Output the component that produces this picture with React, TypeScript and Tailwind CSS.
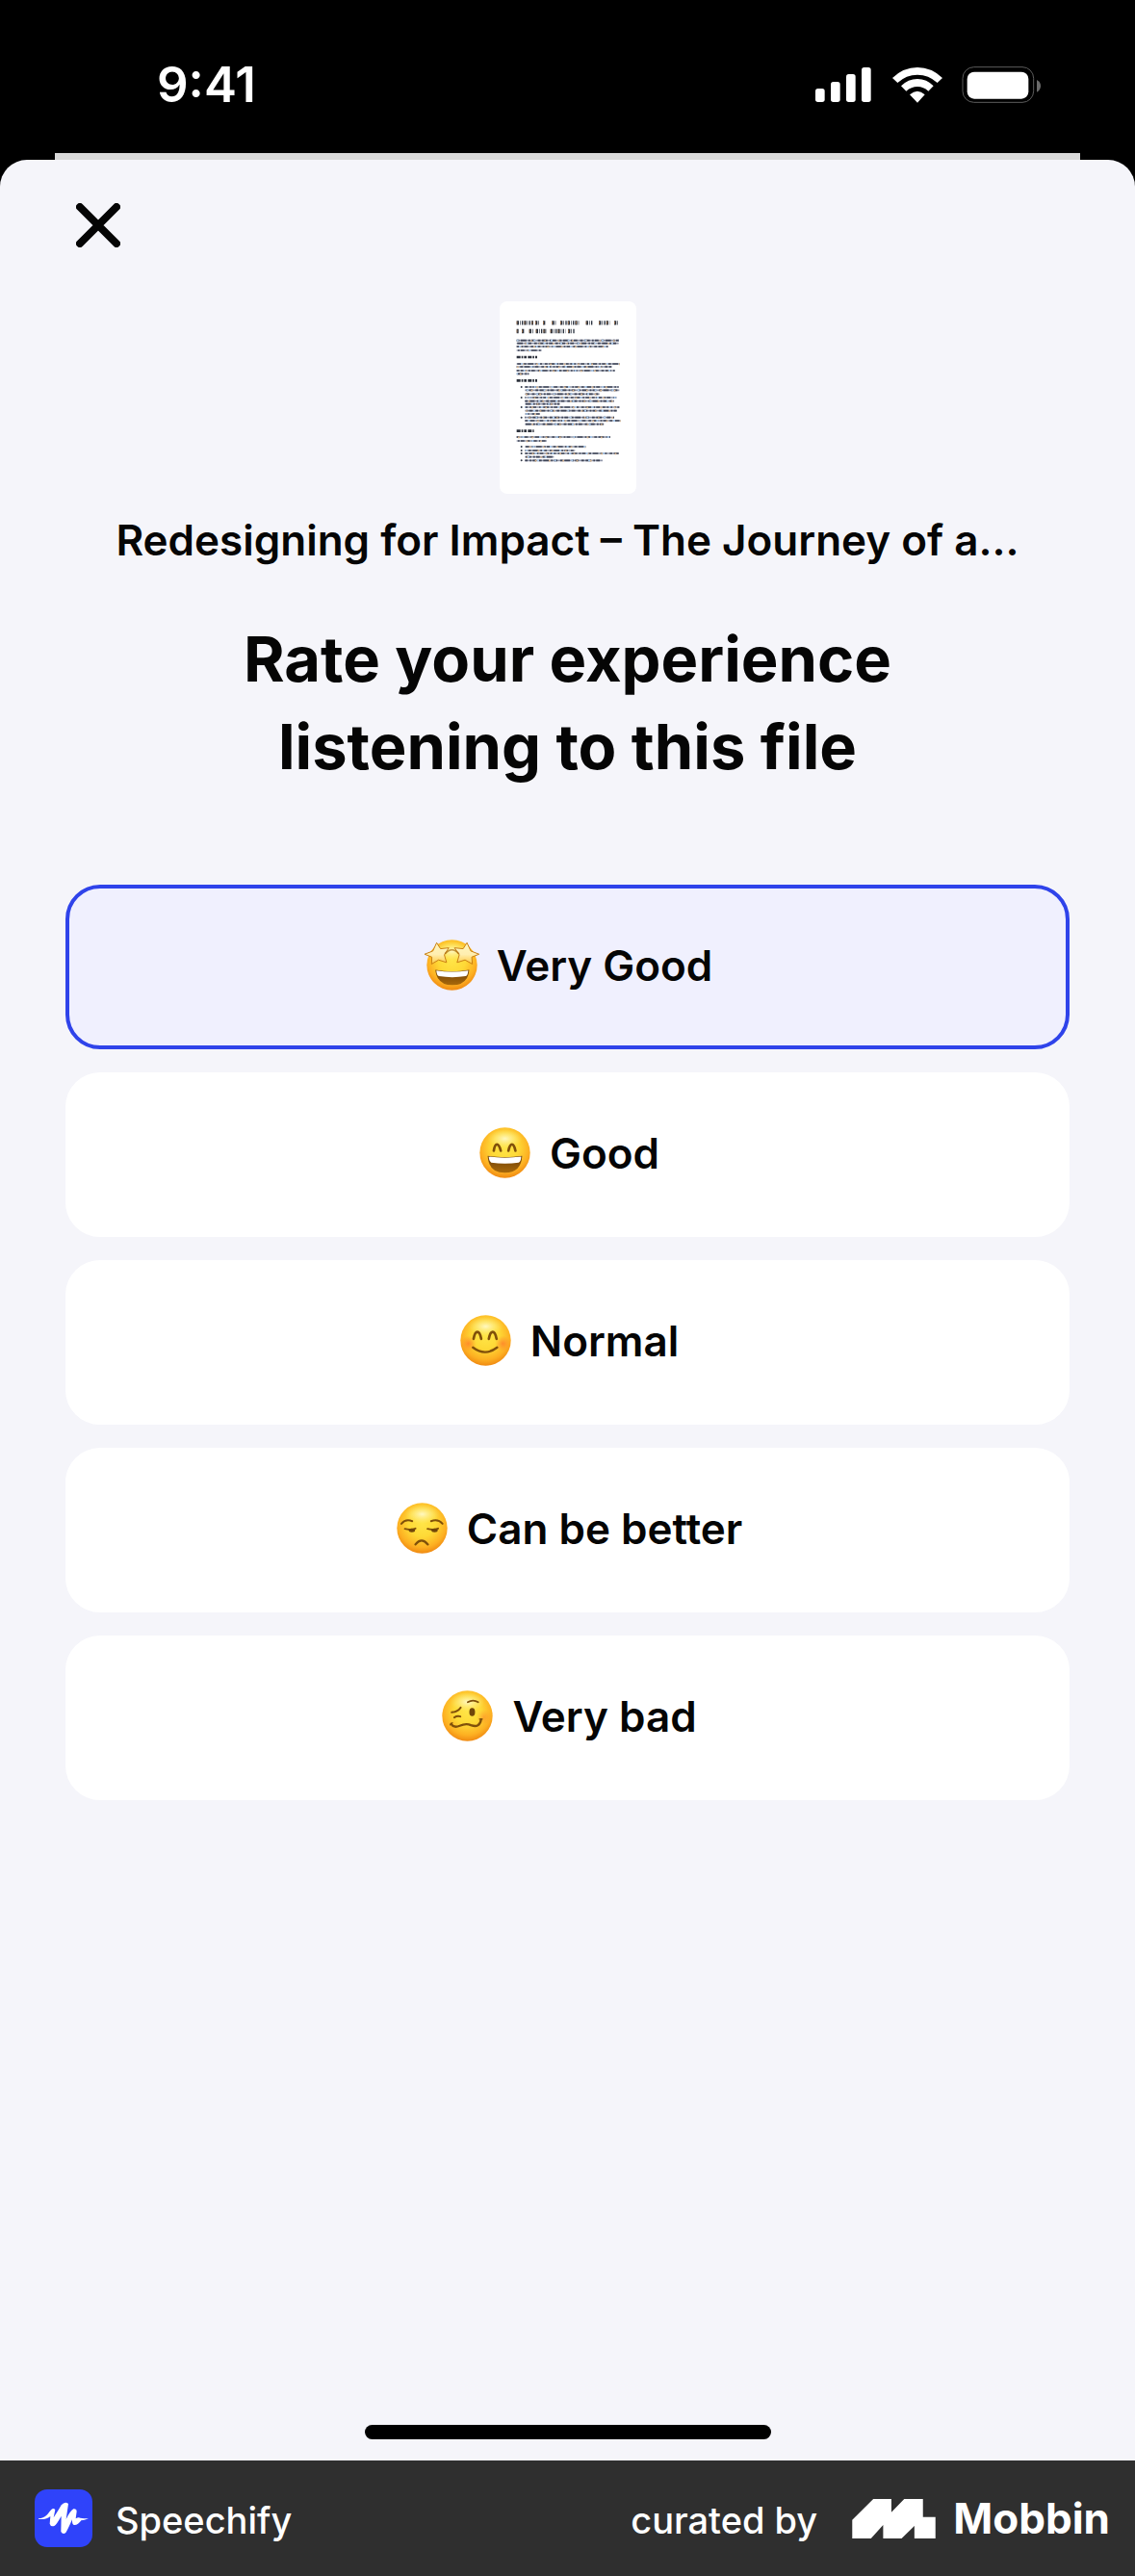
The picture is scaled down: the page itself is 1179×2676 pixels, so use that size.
import { useState, type ReactNode } from 'react'

const thumbnailTitle = [
  { y: 107, dashes: 'M106 107H158M164 107H178M188 107H196M216 107H232M242 107H300M322 107H345M362 107H396M410 107H424' },
  { y: 133, dashes: 'M106 133H112M122 133H129M145 133H158M166 133H200M211 133H258M266 133H286' },
]

// x start, x end, y of every line of the document preview
const thumbnailLines = [
  [106, 425, 162],
  [106, 424, 171],
  [106, 392, 181],
  [106, 184, 193],
  [106, 428, 235],
  [106, 402, 244],
  [106, 412, 256],
  [106, 144, 266],
  [132, 424, 307],
  [132, 426, 317],
  [132, 364, 329],
  [132, 418, 340],
  [132, 410, 351],
  [132, 240, 360],
  [132, 426, 370],
  [132, 418, 381],
  [132, 178, 391],
  [132, 410, 402],
  [132, 430, 412],
  [132, 378, 423],
  [106, 398, 463],
  [106, 200, 475],
  [132, 322, 493],
  [132, 288, 505],
  [132, 424, 514],
  [132, 222, 525],
  [132, 374, 536],
]

const thumbnailHeadings = [
  [106, 170, 214],
  [106, 170, 287],
  [106, 160, 444],
]

const thumbnailBullets = [307, 340, 370, 402, 493, 505, 514, 536]

function DocumentThumbnail() {
  return (
    <svg
      viewBox="53 40 426 600"
      className="h-[200px] w-[142px] rounded-lg bg-white"
      role="img"
      aria-label="Document preview"
    >
      {thumbnailTitle.map((line) => (
        <g key={line.y} fill="none">
          <path d={line.dashes} stroke="#2b3340" strokeWidth="13" strokeDasharray="7 3 2 4 4 3" />
          <path d={line.dashes} stroke="#c98a52" strokeWidth="9" strokeDasharray="2 22" />
        </g>
      ))}
      {thumbnailHeadings.map(([x1, x2, y]) => (
        <path key={y} d={`M${x1} ${y}H${x2}`} stroke="#2d323c" strokeWidth="8" strokeDasharray="12 3 5 3 8 4" />
      ))}
      {thumbnailLines.map(([x1, x2, y], index) => (
        <g key={y} fill="none">
          <path d={`M${x1} ${y}H${x2}`} stroke="#9298aa" strokeWidth="5" />
          <path
            d={`M${x1} ${y}H${x2}`}
            stroke="#3f4557"
            strokeWidth="5"
            strokeDasharray="8 5 17 7 5 4 11 9"
            strokeDashoffset={index * 11}
          />
          <path
            d={`M${x1} ${y + 1}H${x2}`}
            stroke="#d8b48c"
            strokeWidth="5"
            strokeDasharray="5 38"
            strokeDashoffset={index * 17}
          />
          <path
            d={`M${x1} ${y}H${x2}`}
            stroke="#a9c7e8"
            strokeWidth="6"
            strokeDasharray="6 47"
            strokeDashoffset={index * 23}
          />
        </g>
      ))}
      {thumbnailBullets.map((y) => (
        <circle key={y} cx="121" cy={y} r="3" fill="#333a48" />
      ))}
    </svg>
  )
}

function EmojiFace({ children }: { children: ReactNode }) {
  return (
    <svg viewBox="0 0 160 160" className="h-[53px] w-[53px] shrink-0 overflow-visible" aria-hidden="true">
      <circle cx="80" cy="80" r="79" fill="url(#face)" />
      <ellipse cx="80" cy="36" rx="54" ry="30" fill="url(#shine)" />
      {children}
    </svg>
  )
}

function EmojiDefs() {
  return (
    <svg className="absolute h-0 w-0" aria-hidden="true">
      <defs>
        <radialGradient id="face" cx="0.5" cy="0.4" r="0.6">
          <stop offset="0" stopColor="#ffe548" />
          <stop offset="0.45" stopColor="#fed936" />
          <stop offset="0.8" stopColor="#fdb022" />
          <stop offset="1" stopColor="#f08a12" />
        </radialGradient>
        <radialGradient id="shine">
          <stop offset="0" stopColor="#fffbd0" stopOpacity="0.9" />
          <stop offset="1" stopColor="#fff08a" stopOpacity="0" />
        </radialGradient>
        <radialGradient id="blush">
          <stop offset="0" stopColor="#ff7a2a" stopOpacity="0.75" />
          <stop offset="1" stopColor="#ff8a2a" stopOpacity="0" />
        </radialGradient>
        <linearGradient id="star" x1="0" y1="0" x2="0" y2="1">
          <stop offset="0" stopColor="#fff6bd" />
          <stop offset="0.55" stopColor="#ffeeb0" />
          <stop offset="1" stopColor="#ffc93c" />
        </linearGradient>
        <linearGradient id="mouth" x1="0" y1="0" x2="0" y2="1">
          <stop offset="0" stopColor="#6b3d06" />
          <stop offset="1" stopColor="#a9690a" />
        </linearGradient>
      </defs>
    </svg>
  )
}

function StarStruck() {
  return (
    <EmojiFace>
      <path
        d="M32 10L44 29L70 26L56 48L63 72L38 64L16 77L17 55L-6 46L20 36Z"
        fill="url(#star)"
        stroke="#c97f12"
        strokeWidth="3"
        strokeLinejoin="round"
      />
      <path
        d="M127 10L139 36L165 46L142 55L144 77L121 64L96 72L103 48L88 26L115 29Z"
        fill="url(#star)"
        stroke="#c97f12"
        strokeWidth="3"
        strokeLinejoin="round"
      />
      <path d="M58 45Q80 20 102 45" fill="none" stroke="#a8690a" strokeWidth="5" opacity="0.7" />
      <path d="M28 95Q80 106 134 95Q130 143 81 143Q33 143 28 95Z" fill="url(#mouth)" />
      <path d="M31 97Q80 106 131 97Q130 112 123 115Q81 122 39 115Q32 112 31 97Z" fill="#fff" />
    </EmojiFace>
  )
}

function GrinningEyes() {
  return (
    <EmojiFace>
      <g fill="none" stroke="#80500a" strokeWidth="8" strokeLinecap="round">
        <path d="M45 74Q48 54 55 54Q62 54 67 74" />
        <path d="M91 74Q95 54 102 54Q109 54 113 74" />
      </g>
      <path d="M26 90Q80 98 134 90Q131 143 80 143Q29 143 26 90Z" fill="url(#mouth)" />
      <path d="M29 92Q80 99 131 92Q130 108 123 111Q80 117 37 111Q31 108 29 92Z" fill="#fff" />
    </EmojiFace>
  )
}

function SmilingEyes() {
  return (
    <EmojiFace>
      <circle cx="26" cy="90" r="25" fill="url(#blush)" />
      <circle cx="134" cy="90" r="25" fill="url(#blush)" />
      <g fill="none" stroke="#80500a" strokeWidth="8" strokeLinecap="round">
        <path d="M42 75Q46 53 54 53Q62 53 66 75" />
        <path d="M90 75Q94 53 102 53Q110 53 114 75" />
        <path d="M40 102Q78 131 116 102" strokeWidth="7" />
      </g>
    </EmojiFace>
  )
}

function Unamused() {
  return (
    <EmojiFace>
      <g fill="none" stroke="#80500a" strokeWidth="6" strokeLinecap="round">
        <path d="M15 66Q28 50 49 58" />
        <path d="M108 58Q130 50 144 66" />
        <path d="M26 82Q43 87 59 81" />
        <path d="M97 82Q114 87 130 81" />
        <path d="M59 131Q78 107 98 131" strokeWidth="7" />
      </g>
      <ellipse cx="48" cy="87" rx="10" ry="6" fill="#70460a" />
      <ellipse cx="119" cy="87" rx="10" ry="6" fill="#70460a" />
    </EmojiFace>
  )
}

function Woozy() {
  return (
    <EmojiFace>
      <circle cx="132" cy="84" r="24" fill="url(#blush)" opacity="0.6" />
      <g fill="none" stroke="#80500a" strokeWidth="6" strokeLinecap="round">
        <path d="M31 69Q49 68 59 54" />
        <path d="M39 85Q48 79 58 82" />
        <path d="M81 37Q98 27 114 37" strokeWidth="5" />
        <path d="M29 105Q37 119 56 111Q76 102 91 109Q119 119 123 91" strokeWidth="7" />
        <path d="M26 108L33 102M118 90L127 90" strokeWidth="4" />
      </g>
      <ellipse cx="95" cy="68" rx="9" ry="13" fill="#70460a" />
    </EmojiFace>
  )
}

const ratings = [
  { value: 'very-good', label: 'Very Good', icon: StarStruck },
  { value: 'good', label: 'Good', icon: GrinningEyes },
  { value: 'normal', label: 'Normal', icon: SmilingEyes },
  { value: 'can-be-better', label: 'Can be better', icon: Unamused },
  { value: 'very-bad', label: 'Very bad', icon: Woozy },
]

function StatusBar() {
  return (
    <div className="flex h-[159px] items-center justify-between pt-4 pr-[98px] pl-[163px] text-white">
      <span className="text-[51px] leading-none font-semibold">9:41</span>
      <svg viewBox="141 84 702 114" className="h-[38px] w-[234px]" aria-label="Signal, Wi-Fi and battery">
        <g fill="#fff">
          <rect x="141" y="153" width="29" height="42" rx="8" />
          <rect x="189" y="132" width="29" height="63" rx="8" />
          <rect x="237" y="108" width="29" height="87" rx="8" />
          <rect x="285" y="87" width="29" height="108" rx="8" />
          <path d="M381 120Q415 87 459 87Q503 87 537 120L521 135Q494 110 459 110Q424 110 397 135Z" />
          <path d="M408 145Q430 123 459 123Q488 123 509 145L493 161Q478 147 459 147Q440 147 424 161Z" />
          <path d="M435 172Q459 150 482 172L459 197Z" />
          <rect x="614" y="101" width="191" height="84" rx="22" />
        </g>
        <rect x="600" y="86" width="221" height="110" rx="35" fill="none" stroke="#5c5c5c" strokeWidth="3" />
        <path d="M831 126Q843 132 843 145Q843 158 831 164Z" fill="#6b6b6b" />
      </svg>
    </div>
  )
}

function Footer() {
  return (
    <footer className="flex h-[120px] items-center justify-between bg-[#2f2f2f] pr-[26px] pl-9 text-white">
      <div className="flex items-center gap-6">
        <svg viewBox="108 258 180 180" className="h-[60px] w-[60px]" aria-hidden="true">
          <rect x="108" y="258" width="180" height="180" rx="39" fill="#2f43fa" />
          <path
            d="M120 349C142 349 151 331 160 321Q167 314 172 322L167 346Q184 320 191 307Q203 294 213 303L206 351Q218 326 229 319Q239 318 239 327L236 349Q245 343 250 347Q260 349 276 349Q262 355 253 355Q242 371 230 369Q224 367 225 352Q210 386 205 393Q196 400 190 390L191 341Q175 370 169 372Q158 376 155 365L157 342Q146 353 120 351Z"
            fill="#fff"
          />
        </svg>
        <span className="pt-1 text-[38px] leading-none font-medium">Speechify</span>
      </div>
      <div className="flex items-center">
        <span className="pt-1 text-[38px] leading-none font-medium">curated by</span>
        <svg viewBox="716 288 253 120" className="ml-9 h-[41px] w-[87px]" aria-hidden="true">
          <path
            d="M716 352L780 288H835V328L874 288H931V343H969V408H905V370L866 408H810V367L773 408H716Z"
            fill="#fff"
          />
        </svg>
        <span className="ml-[18px] text-[44px] leading-none font-bold">Mobbin</span>
      </div>
    </footer>
  )
}

export default function App() {
  const [selected, setSelected] = useState('very-good')

  return (
    <div className="flex min-h-screen flex-col bg-black font-['Inter','Liberation_Sans',sans-serif] text-[#050505]">
      <EmojiDefs />
      <StatusBar />
      <div className="mx-[57px] h-[7px] bg-[#d9d9d9]" />

      <main className="flex flex-1 flex-col rounded-t-[28px] bg-[#f5f5fa] px-[68px]">
        <button type="button" aria-label="Close" className="mt-[45px] ml-[11px] self-start">
          <svg viewBox="0 0 46 46" className="h-[46px] w-[46px]" fill="none">
            <path d="M4 4L42 42M42 4L4 42" stroke="#050505" strokeWidth="8" strokeLinecap="round" />
          </svg>
        </button>

        <div className="mt-14 flex flex-col items-center text-center">
          <DocumentThumbnail />
          <p className="mt-[18px] text-[44px] leading-[60px] font-semibold">
            Redesigning for Impact – The Journey of a...
          </p>
          <h1 className="mt-12 text-[65px] leading-[91px] font-bold">
            Rate your experience
            <br />
            listening to this file
          </h1>
        </div>

        <fieldset aria-label="Rating" className="mt-[98px] flex flex-col gap-6">
          {ratings.map(({ value, label, icon: Icon }) => (
            <label
              key={value}
              className="relative flex h-[171px] cursor-pointer items-center justify-center gap-5 rounded-[36px] border-4 border-white bg-white pb-1 pl-1 text-[44px] leading-none font-semibold has-checked:border-[#2f43ea] has-checked:bg-[#f0f0fe]"
            >
              <input
                type="radio"
                name="rating"
                value={value}
                checked={selected === value}
                onChange={() => setSelected(value)}
                className="sr-only"
              />
              <Icon />
              {label}
            </label>
          ))}
        </fieldset>

        <div className="mx-auto mt-auto mb-[22px] h-[15px] w-[422px] rounded-full bg-black" />
      </main>

      <Footer />
    </div>
  )
}
